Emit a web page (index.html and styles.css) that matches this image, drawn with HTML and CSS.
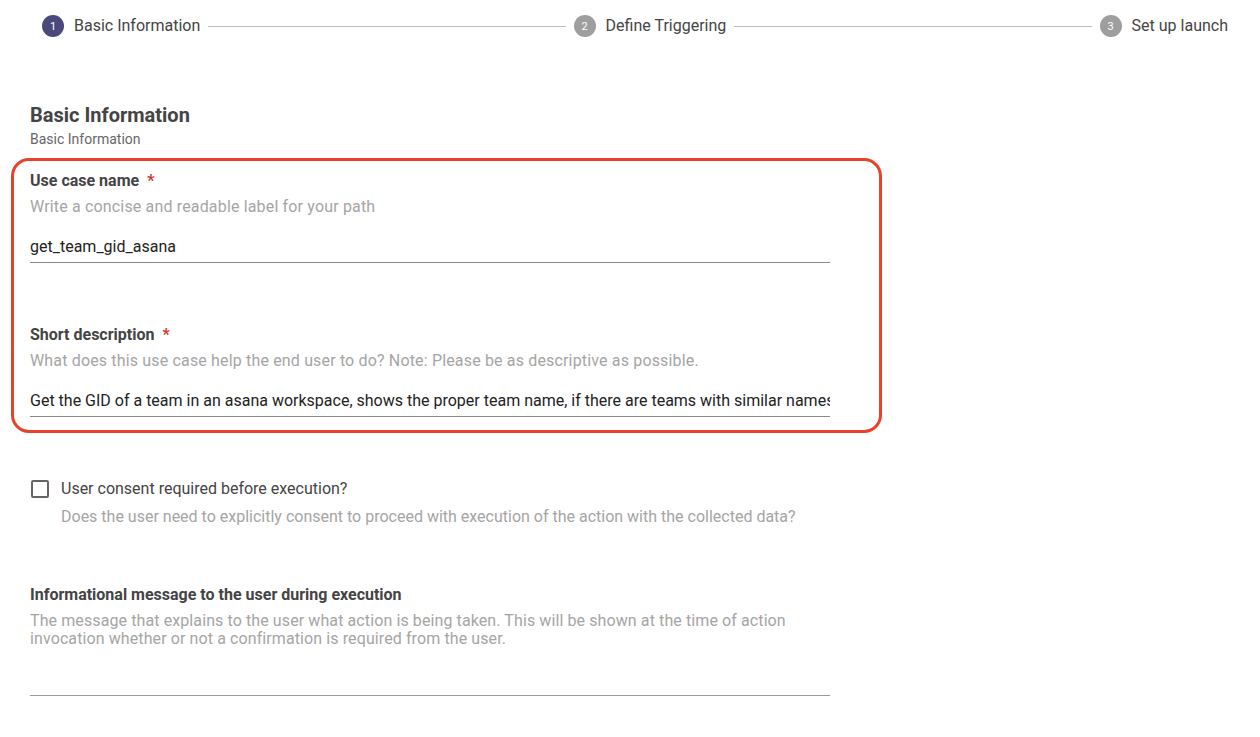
FILE: index.html
```html
<!DOCTYPE html>
<html>
<head>
<meta charset="utf-8">
<link rel="stylesheet" href="styles.css">
</head>
<body>
<div class="stepper">
  <div class="step"><span class="dot active">1</span><span class="step-label">Basic Information</span></div>
  <div class="line"></div>
  <div class="step"><span class="dot">2</span><span class="step-label">Define Triggering</span></div>
  <div class="line"></div>
  <div class="step"><span class="dot">3</span><span class="step-label">Set up launch</span></div>
</div>

<div class="form">
  <h2 class="title">Basic Information</h2>
  <div class="subtitle">Basic Information</div>

  <div class="highlight">
    <div class="field">
      <div class="label">Use case name <span class="req">*</span></div>
      <div class="help">Write a concise and readable label for your path</div>
      <div class="input">get_team_gid_asana</div>
    </div>
    <div class="field second">
      <div class="label">Short description <span class="req">*</span></div>
      <div class="help">What does this use case help the end user to do? Note: Please be as descriptive as possible.</div>
      <div class="input">Get the GID of a team in an asana workspace, shows the proper team name, if there are teams with similar names</div>
    </div>
  </div>

  <div class="check-row">
    <span class="box"></span>
    <div class="check-text">
      <div class="check-label">User consent required before execution?</div>
      <div class="check-help">Does the user need to explicitly consent to proceed with execution of the action with the collected data?</div>
    </div>
  </div>

  <div class="field info">
    <div class="label">Informational message to the user during execution</div>
    <div class="help multi">The message that explains to the user what action is being taken. This will be shown at the time of action invocation whether or not a confirmation is required from the user.</div>
    <div class="input empty"></div>
  </div>
</div>
</body>
</html>
```

FILE: styles.css
```css
* { box-sizing: border-box; }
html, body { margin: 0; padding: 0; background: #fff; }
body {
  font-family: Roboto, "Liberation Sans", sans-serif;
  color: #444;
  width: 1260px;
  height: 737px;
  overflow: hidden;
}

.stepper {
  display: flex;
  align-items: center;
  padding: 15px 32px 0 42px;
  height: 37px;
}
.step { display: flex; align-items: center; }
.dot {
  width: 22px; height: 22px; border-radius: 50%;
  background: #9e9e9e; color: #fff;
  font-size: 11px;
  display: flex; align-items: center; justify-content: center;
}
.dot.active { background: #4b497c; }
.step-label { margin-left: 10px; font-size: 16px; color: #444; line-height: 22px; }
.line { flex: 1; height: 1px; background: #bdbdbd; margin: 0 8px; }

.form { padding-left: 30px; padding-top: 66px; }
.title { margin: 0; font-size: 20px; font-weight: 700; line-height: 24px; color: #444; }
.subtitle { font-size: 14px; line-height: 16px; color: #666; margin-top: 4px; }

.highlight {
  margin-top: 11px;
  margin-left: -19px;
  width: 871px;
  border: 3px solid #e8432a;
  border-radius: 18px;
  padding: 10px 49px 13px 16px;
}

.field { width: 800px; }
.field.second { margin-top: 62px; }
.label { font-size: 16px; font-weight: 700; line-height: 20px; color: #444; }
.req { color: #d0372c; margin-left: 4px; }
.help { font-size: 16px; line-height: 20px; color: #a5a5a5; margin-top: 6px; letter-spacing: 0.16px; }
.help.multi { line-height: 18px; margin-top: 7px; letter-spacing: 0.1px; }
.input {
  margin-top: 18px;
  font-size: 16px; line-height: 24px; color: #222;
  border-bottom: 1px solid #8a8a8a;
  padding-bottom: 3px;
  white-space: nowrap; overflow: hidden;
}
.input.empty { height: 28px; margin-top: 20px; border-bottom-color: #9a9a9a; }

.check-row { display: flex; margin-top: 45px; padding-left: 1px; }
.box {
  width: 18px; height: 18px; border: 2px solid #666; border-radius: 2px;
  margin-top: 2px; flex: none;
}
.check-text { margin-left: 12px; }
.check-label { font-size: 16px; line-height: 22px; color: #444; }
.check-help { font-size: 16px; line-height: 20px; color: #a5a5a5; margin-top: 7px; }

.field.info { margin-top: 58px; }
```
